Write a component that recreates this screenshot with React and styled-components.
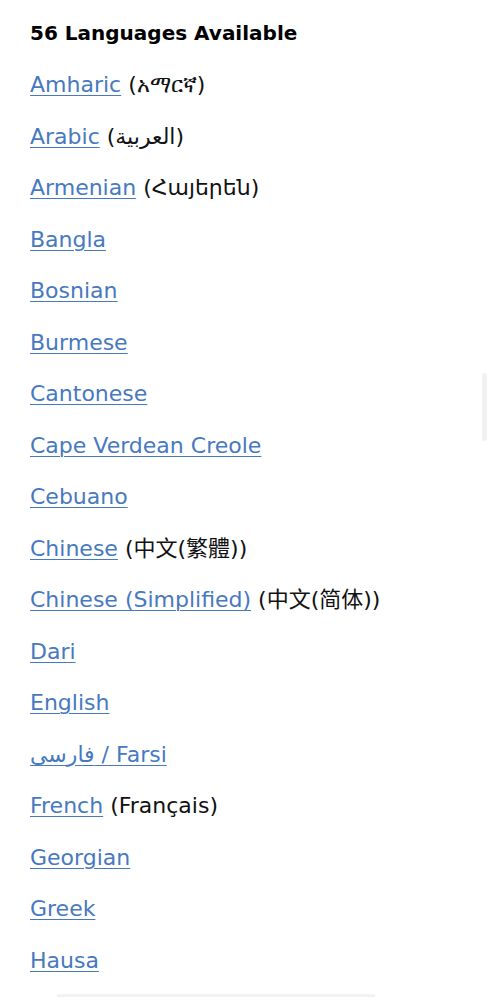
import React from "react";
import styled, { createGlobalStyle } from "styled-components";

const languages = [
	{ name: "Amharic", native: "አማርኛ" },
	{ name: "Arabic", native: "العربية" },
	{ name: "Armenian", native: "Հայերեն" },
	{ name: "Bangla" },
	{ name: "Bosnian" },
	{ name: "Burmese" },
	{ name: "Cantonese" },
	{ name: "Cape Verdean Creole" },
	{ name: "Cebuano" },
	{ name: "Chinese", native: "中文(繁體)" },
	{ name: "Chinese (Simplified)", native: "中文(简体)" },
	{ name: "Dari" },
	{ name: "English" },
	{ name: "فارسی / Farsi" },
	{ name: "French", native: "Français" },
	{ name: "Georgian" },
	{ name: "Greek" },
	{ name: "Hausa" },
	{ name: "Haitian Creole", native: "Kreyòl Ayisyen" },
];

function App() {
	return (
		<>
			<GlobalStyle />
			<Page>
				<Title>56 Languages Available</Title>
				<List>
					{languages.map((lang) => (
						<Item key={lang.name}>
							<LangLink href="#">{lang.name}</LangLink>
							{lang.native && <Native> ({lang.native})</Native>}
						</Item>
					))}
				</List>
			</Page>
			<ScrollThumb />
			<BottomBar />
		</>
	);
}

const GlobalStyle = createGlobalStyle`
	html, body {
		margin: 0;
		background: #ffffff;
		overflow: hidden;
	}
`;

const Page = styled.div`
	font-family: "DejaVu Sans", "Noto Sans", "Noto Sans CJK TC", sans-serif;
	padding: 20px 30px 0;
	height: 1000px;
	overflow: hidden;
`;

const Title = styled.h2`
	margin: 0 0 25px;
	font-size: 20px;
	font-weight: 700;
	color: #000;
	line-height: 26px;
`;

const List = styled.ul`
	margin: 0;
	padding: 0;
	list-style: none;
	display: flex;
	flex-direction: column;
	gap: 23px;
`;

const Item = styled.li`
	font-size: 22px;
	line-height: 28.5px;
	white-space: nowrap;
`;

const LangLink = styled.a`
	color: #4779bf;
	text-decoration: underline;
	text-decoration-thickness: 1px;
	text-underline-offset: 3px;
`;

const Native = styled.span`
	color: #111;
`;

const ScrollThumb = styled.div`
	position: fixed;
	right: 2px;
	top: 373px;
	width: 5px;
	height: 68px;
	background: #f1f1f1;
	border-radius: 3px;
`;

const BottomBar = styled.div`
	position: fixed;
	left: 57px;
	bottom: 3px;
	width: 318px;
	height: 3px;
	background: #f3f3f3;
`;

export default App;
